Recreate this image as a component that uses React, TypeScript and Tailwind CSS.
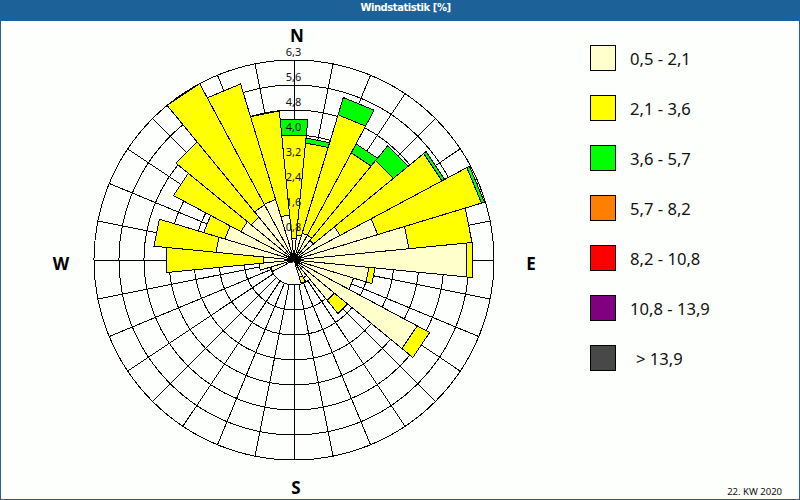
const CX = 294;
const CY = 260;

const wedges: [number, number, number, number][] = [
  [0, 22, 125, 141],
  [11.25, 25, 117, 122],
  [22.5, 28, 151, 169],
  [33.75, 28, 121, 131],
  [45, 25, 128, 147],
  [56.25, 52, 167, 170],
  [67.5, 87, 195, 198],
  [78.75, 115, 178, 0],
  [90, 172, 178, 0],
  [101.25, 75, 81, 0],
  [112.5, 62, 0, 0],
  [123.75, 139, 153, 0],
  [135, 52, 69, 0],
  [146.25, 20, 0, 0],
  [157.5, 18, 24, 0],
  [247.5, 24, 0, 0],
  [258.75, 35, 0, 0],
  [270, 31, 128, 0],
  [281.25, 78, 140, 0],
  [292.5, 72, 94, 0],
  [303.75, 60, 136, 0],
  [315, 55, 152, 0],
  [326.25, 62, 199, 0],
  [337.5, 63, 183, 0],
  [348.75, 45, 149, 0],
];

function pt(deg: number, r: number): string {
  const a = (deg * Math.PI) / 180;
  return `${(CX + r * Math.sin(a)).toFixed(1)},${(CY - r * Math.cos(a)).toFixed(1)}`;
}

function band(deg: number, r0: number, r1: number): string {
  const h = 5.625;
  const k = 1.005;
  return [pt(deg - h, r0 * k), pt(deg - h, r1 * k), pt(deg + h, r1 * k), pt(deg + h, r0 * k)].join(" ");
}

const legend = [
  { c: "bg-[#ffffcc]", t: "0,5 - 2,1", x: "" },
  { c: "bg-[#ffff00]", t: "2,1 - 3,6", x: "" },
  { c: "bg-[#00ff00]", t: "3,6 - 5,7", x: "" },
  { c: "bg-[#ff8000]", t: "5,7 - 8,2", x: "" },
  { c: "bg-[#ff0000]", t: "8,2 - 10,8", x: "" },
  { c: "bg-[#800080]", t: "10,8 - 13,9", x: "" },
  { c: "bg-[#484848]", t: "> 13,9", x: "pl-[6px]" },
];

const scale = ["0,8", "1,6", "2,4", "3,2", "4,0", "4,8", "5,6", "6,3"];
const font = "font-['Noto_Sans','DejaVu_Sans',sans-serif]";

export default function App() {
  const spokes = Array.from({ length: 32 }, (_, i) => i * 11.25);
  return (
    <div className={`w-[800px] h-[500px] flex flex-col bg-[#fdfffd] border-x border-b border-[#1c6198] ${font}`}>
      <div className="h-[21px] -mx-px bg-[#1c6198] flex items-center justify-center pl-[11px] pb-[5px] shrink-0">
        <span className="text-white text-[10px] leading-none font-bold font-['DejaVu_Sans',sans-serif] tracking-[-0.45px]">Windstatistik [%]</span>
      </div>
      <div className="flex flex-1 min-h-0">
        <svg viewBox="1 21 589 478" className="w-[589px] h-[478px] shrink-0">
          <g stroke="#000" fill="none" strokeWidth="1" shapeRendering="crispEdges">
            {spokes.map((d) => {
              const a = (d * Math.PI) / 180;
              return (
                <line
                  key={d}
                  x1={CX + 25 * Math.sin(a)}
                  y1={CY - 25 * Math.cos(a)}
                  x2={CX + 200 * Math.sin(a)}
                  y2={CY - 200 * Math.cos(a)}
                />
              );
            })}
            {[1, 2, 3, 4, 5, 6, 7, 8].map((k) => (
              <circle key={k} cx={CX} cy={CY} r={k * 25} />
            ))}
          </g>
          <g stroke="#000" strokeWidth="1" shapeRendering="crispEdges" strokeLinejoin="miter">
            {wedges.map(([d, p, y, g]) => (
              <g key={d}>
                {g > 0 && <polygon points={band(d, y, g)} fill="#00ff00" />}
                {y > 0 && <polygon points={band(d, p, y)} fill="#ffff00" />}
                <polygon points={band(d, 0, p)} fill="#ffffcc" />
              </g>
            ))}
          </g>
          <circle cx={291} cy={260} r={3} fill="#000" />
          <circle cx={298} cy={260} r={2.5} fill="#000" />
          <line x1={CX} y1={60} x2={CX} y2={120} stroke="#000" strokeWidth="1" shapeRendering="crispEdges" />
          <g fontSize="11" textAnchor="middle" fill="#111" fontFamily="'Noto Sans', sans-serif">
            {scale.map((s, i) => (
              <text key={s} x={293.5} y={231 - i * 25}>
                {s}
              </text>
            ))}
          </g>
          <g fontSize="17" fontWeight="700" textAnchor="middle" fill="#000" fontFamily="'Noto Sans', sans-serif">
            <text x={297} y={42}>N</text>
            <text x={61} y={270}>W</text>
            <text x={531} y={270}>E</text>
            <text x={296} y={494}>S</text>
          </g>
        </svg>
        <div className="flex-1 flex flex-col pt-[24px] pr-[17px] pb-[3px]">
          <div className="flex flex-col gap-[24px]">
            {legend.map((l) => (
              <div key={l.t} className="flex items-center gap-[14px] h-[26px]">
                <div className={`w-[26px] h-[26px] border border-black ${l.c}`} />
                <span className={`text-[16.6px] leading-none pt-[3px] text-[#111] ${l.x}`}>{l.t}</span>
              </div>
            ))}
          </div>
          <div className="mt-auto self-end text-[9.5px] leading-none text-[#111]">22. KW 2020</div>
        </div>
      </div>
    </div>
  );
}
